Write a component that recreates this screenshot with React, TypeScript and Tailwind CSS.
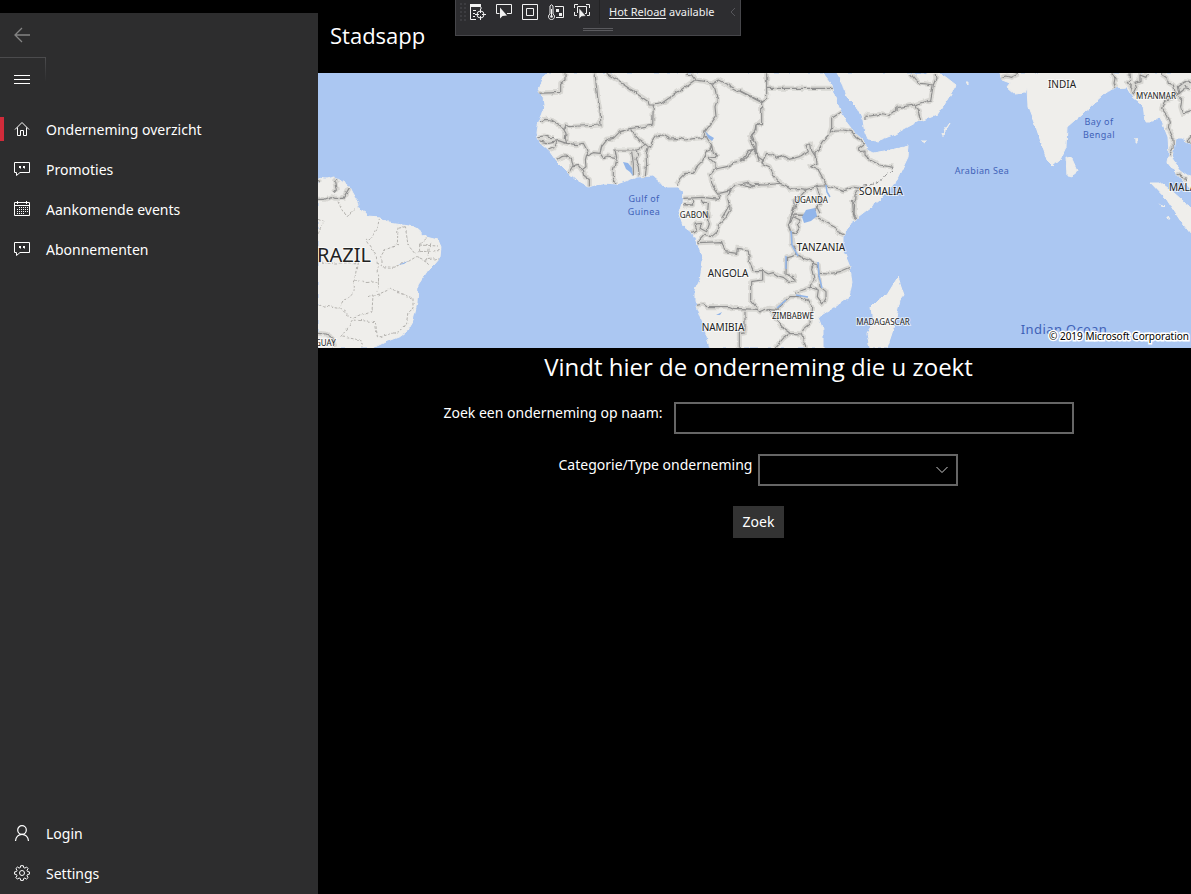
import type { ReactNode } from "react";

type Label = { text: string; x: number; y: number; size: number; start?: boolean };

const COUNTRIES: Label[] = [
  { text: "RAZIL", x: 317, y: 262, size: 20, start: true },
  { text: "GUAY", x: 315, y: 346, size: 8, start: true },
  { text: "GABON", x: 694, y: 218, size: 8 },
  { text: "UGANDA", x: 811, y: 203, size: 8 },
  { text: "SOMALIA", x: 881, y: 195, size: 10 },
  { text: "TANZANIA", x: 821, y: 251, size: 10 },
  { text: "ANGOLA", x: 728, y: 277, size: 10 },
  { text: "NAMIBIA", x: 723, y: 331, size: 10 },
  { text: "ZIMBABWE", x: 793, y: 319, size: 8 },
  { text: "MADAGASCAR", x: 883, y: 325, size: 8 },
  { text: "INDIA", x: 1062, y: 88, size: 10 },
  { text: "MYANMAR", x: 1156, y: 99, size: 8 },
  { text: "MALAYSIA", x: 1169, y: 191, size: 10, start: true },
];

const SEAS: Label[] = [
  { text: "Gulf of", x: 644, y: 202, size: 9 },
  { text: "Guinea", x: 644, y: 215, size: 9 },
  { text: "Bay of", x: 1099, y: 125, size: 9 },
  { text: "Bengal", x: 1099, y: 138, size: 9 },
  { text: "Arabian Sea", x: 982, y: 174, size: 9 },
  { text: "Indian Ocean", x: 1064, y: 334, size: 13 },
];

const LAND = [
  "M318 178L326 179L335 177L341 181L350 187L353 193L359 203L357 208L366 213L367 216L380 217L389 223L403 225L415 227L426 237L438 240L441 247L440 257L434 264L428 270L418 285L417 303L413 320L406 332L401 336L385 342L373 348L318 348Z",
  "M548 73L543 79L538 92L543 97L544 104L543 113L538 125L537 133L540 143L550 152L557 162L567 172L577 181L588 187L602 183L617 184L637 177L653 176L658 180L664 187L677 187L683 192L682 203L679 213L683 225L692 232L697 242L703 260L700 280L695 290L695 300L703 323L710 348L823 348L823 330L818 317L833 308L849 297L852 283L850 267L843 250L843 237L850 223L863 213L880 200L897 180L908 157L909 146L890 150L873 153L867 150L865 142L855 133L847 123L840 110L835 97L832 85L823 73Z",
  "M837 73L843 83L847 97L857 107L863 120L865 133L868 140L877 141L893 135L917 122L937 115L947 100L956 85L947 78L940 73L928 73L925 75L915 75L912 73Z",
  "M1000 73L1002 80L1010 83L1007 87L1015 94L1025 93L1027 88L1028 107L1037 130L1047 160L1053 166L1060 160L1066 147L1067 127L1083 113L1103 95L1113 88L1127 87L1133 97L1143 105L1145 122L1153 122L1160 117L1168 137L1169 153L1167 162L1175 172L1187 185L1200 200L1200 182L1187 175L1180 170L1172 158L1175 138L1182 138L1200 150L1200 73Z",
  "M1066 157L1072 159L1077 170L1073 177L1067 176Z",
  "M1150 182L1160 182L1173 192L1200 216L1200 240L1191 234L1180 220L1167 200Z",
  "M898 277L904 295L900 300L892 333L887 348L870 348L867 333L873 323L871 307L878 300L887 295Z",
  "M1160 203l4 3l-1 1zM1168 216l2 3l-2 0zM1136 138l1 4l-1 0zM922 141l5 0l-2 2zM941 135l9 -12l-7 12zM966 82l2 0l0 3z",
];

const BORDERS = [
  {
    origin: "translate(520 70) scale(0.33333)",
    d: "M135 10L135 30L122 40L122 67L50 70M225 10L234 90L240 120L243 165L180 168L145 170L138 164L132 180L125 170L95 150L75 148L60 158M132 180L138 190L136 205L140 220L170 224L190 220L198 235L205 255L220 248L240 250L250 264L262 258L285 262M55 200L75 198L85 202L105 203M55 212L80 218L115 212L140 220M110 215L105 232L85 240M110 270L125 260L140 258L155 268L160 290L175 286L185 300L198 290L196 270L200 255M160 285L145 310M190 300L195 320L208 325L208 350M285 240L290 262L280 300L280 325L288 340M260 10L320 50L385 95L387 105L400 105L425 100L525 30L515 15L500 12M525 30L555 34L575 42L595 30L720 95M400 105L398 165L360 172L335 175L300 185L280 205L262 208L245 230L240 250M335 178L345 195L360 212L375 222L365 235L350 240L285 240M345 240L355 250L345 268L355 290L358 320M335 245L340 280L340 315M375 222L385 230L378 255L380 280L376 320M378 225L392 232L395 215L405 198L430 195L450 207L480 205L495 210L525 205L550 203L555 185L588 140L585 110L592 90L585 60L575 42M555 195L575 225L570 240L558 245L545 275L530 290L520 310L495 310L480 325L470 345M575 225L580 250L590 258L565 262L585 280L585 298L570 315L575 335L580 350L598 375L595 388L550 382L490 385M585 298L620 290L640 278L670 270L700 240L712 255L718 275M720 160L708 165L705 185L692 200L705 220L705 240M598 370L632 362L645 345L680 338L700 348L720 345M490 403L518 405L518 388M632 362L622 380L628 405L605 445M545 388L550 400L565 400L563 420L568 445",
  },
  {
    origin: "translate(740 70) scale(0.33333)",
    d: "M80 10L80 55L280 55M80 55L80 85L65 95L0 62M65 95L65 160L48 165L48 180L35 195L42 210L30 210L45 240L55 262L68 270L65 280M45 240L25 245L10 265L0 270M65 280L80 250L95 252L110 265L130 258L145 268L160 265L185 258L205 245L198 225L212 222L215 242L230 265M65 280L88 290L100 315L120 340L135 345L155 358L180 355L200 358L240 348L260 348L300 358L310 362L340 352L360 355M0 345L35 352L45 344L75 345L120 340M305 125L275 145L275 170L268 195L250 215L235 240L225 250L228 280L212 290L235 300L245 318L260 348M268 190L285 180L310 180L335 185L350 202L375 220L355 235L357 242L375 240L375 255L390 270L420 285L460 292M355 360L345 375L342 440L352 450M375 150L375 135L390 138L420 133L445 138L475 112L525 105L572 90L580 45L560 42L540 40L525 28L512 12M580 45L588 25L585 12M525 105L535 125L542 150M200 358L180 380L162 390L162 410L152 445M230 352L238 375L245 395L230 410L240 430M160 435L230 435",
  },
  {
    origin: "translate(640 200) scale(0.33333)",
    d: "M268 0L270 30L255 55L235 75L232 95L215 110L195 103L175 125M188 35L205 40L203 60L208 72L200 95L180 85L185 70L165 72L170 88L155 98M130 15L160 15M175 128L245 125L255 155L290 160L292 145L325 150L328 185L340 212L368 212L368 240L332 245L332 300L352 325M368 212L385 222L400 218L415 228L430 232L450 248L462 245L460 230L438 222L440 170L470 162L480 170M165 317L190 312L200 320L270 320L280 325L352 328L360 336L385 325L412 328M475 0L455 45L445 75L455 100L455 130L475 170L505 180L522 190L515 205L522 240L510 262L465 280M455 45L525 48L560 68L590 85L600 102L612 108M545 0L525 30M540 220L565 222L600 215L632 202M522 190L535 195L540 260L558 275L558 295L548 312L532 290L535 270L512 262M412 328L425 312L450 290L480 290L505 302L515 320L510 370L495 382L485 402L450 400L430 385L410 360L400 345L385 325M450 400L430 415L405 443M485 402L490 425L498 443M315 332L315 395L298 398L298 443M638 0L640 40L655 60M445 75L460 50L480 60L472 72L478 85L465 103L452 95",
  },
  {
    origin: "translate(960 70) scale(0.33333)",
    d: "M120 25L140 18L155 22L175 12M455 10L465 25L462 40L470 60M510 10L512 30L502 38L515 52L520 75L530 55L525 40L540 35L540 15L558 22L562 12M605 10L620 20L625 40L640 45L645 65L655 72L635 85L615 90L605 115L620 135L628 160L625 175L638 200L640 230L625 258M655 72L670 60L675 50L693 55M655 80L665 90L662 110L668 130L693 122M693 195L685 210L693 225M660 72L655 50L675 35L693 38M645 318L660 312L665 325L682 328",
  },
  {
    origin: "translate(318 160) scale(0.33333)",
    d: "M0 118L20 118L40 110L50 115L75 115L95 82M58 55L50 62L55 90L48 98M0 60L5 70M0 520L25 522L45 535L50 560",
  },
];

const STATES =
  "M60 125L72 150L88 170L100 155L118 140M0 178L18 185L8 205L0 222M185 172L180 195L160 235L145 238L162 265L175 290L180 320L182 350L180 395M240 200L238 255L200 270L188 290L190 320L225 322L270 305L295 290L320 300L335 318M262 200L270 255L290 280L305 275L305 255L325 235M262 200L240 205M305 255L360 258M305 275L362 272M320 300L362 295M335 250L330 290M0 310L118 308L110 360L140 368L180 365M110 362L108 395L75 425L65 445L0 435M65 445L105 475L162 455L165 405L150 410M165 410L215 388L260 405L285 415L285 445L270 455L265 495L240 515L190 530L178 530L172 485L105 480L85 510L68 530L128 540L135 563";

function Icon({ children, className = "" }: { children: ReactNode; className?: string }) {
  return (
    <svg viewBox="0 0 16 16" className={`size-4 shrink-0 ${className}`} fill="none" stroke="currentColor" aria-hidden="true">
      {children}
    </svg>
  );
}

const BackIcon = () => (
  <Icon className="text-[#848484]">
    <path d="M16 8H1M8 1L1 8l7 7" strokeWidth="1.300" />
  </Icon>
);

const MenuIcon = () => (
  <Icon>
    <path d="M0 3.500h16M0 7.500h16M0 11.500h16" />
  </Icon>
);

const HomeIcon = () => (
  <Icon>
    <path d="M1 8.500L8 1.500l7 7M3.500 6.500v8h3v-5h3v5h3v-8" />
  </Icon>
);

const MessageIcon = () => (
  <Icon>
    <path d="M.5 1.500h15v10H6l-3.500 3v-3h-2z" />
    <path d="M5 5h2v2L6 8V7H5zM9 5h2v2l-1 1V7H9z" fill="currentColor" stroke="none" />
  </Icon>
);

const CalendarIcon = () => (
  <Icon>
    <path d="M.5 1.500h15v13H.5zM.5 4.500h15M3.500 0v3M12.500 0v3" />
    <path d="M5 6.500h9M3 8.500h11M3 10.500h11M3 12.500h8" strokeDasharray="1 1" />
  </Icon>
);

const PersonIcon = () => (
  <Icon>
    <circle cx="8" cy="5" r="4.300" strokeWidth="1.200" />
    <path d="M1.500 16c.2-4 3-6.700 6.500-6.700s6.300 2.700 6.500 6.700" strokeWidth="1.200" />
  </Icon>
);

const GearIcon = () => (
  <Icon>
    <path
      d="M6.700.7h2.600l.4 1.900 1.200.5 1.700-1.100 1.500 1.600-1.100 1.700.5 1.200 1.900.4v2.300l-1.900.4-.5 1.200 1.100 1.700-1.600 1.600-1.600-1.100-1.200.5-.4 1.900H6.700l-.4-1.900-1.200-.5-1.700 1.100-1.500-1.600L3 10.800l-.5-1.200-1.900-.4V6.900l1.900-.4L3 5.300 1.900 3.600 3.500 2l1.600 1.100 1.200-.5z"
    />
    <circle cx="8" cy="8" r="2.500" />
  </Icon>
);

const TreeIcon = () => (
  <Icon>
    <path d="M0 1.500h11" strokeWidth="3" />
    <path d="M.5 3v12.500H6M11 3v2M3 6.500h3M3 9.500h2M3 12.500h2" />
    <circle cx="10.500" cy="10.500" r="3.500" />
    <path d="M10.500 5v4M10.500 12v4M5 10.500h4M12 10.500h4" />
  </Icon>
);

const SelectElementIcon = () => (
  <Icon>
    <path d="M3.500 9.500h-3v-9h15v9H11" />
    <path d="M4 3.500v11l2.500-2.500 4.500-.5z" fill="currentColor" stroke="none" />
  </Icon>
);

const AdornersIcon = () => (
  <Icon>
    <path d="M.5.5h15v15H.5zM4.500 4.500h7v7h-7z" />
  </Icon>
);

const ThermoIcon = () => (
  <Icon>
    <path d="M2 10V2q1.500-2.500 3 0v8a3 3 0 1 1-3 0z" />
    <path d="M3.500 5v8M7 2.500h8.500v11H8" />
    <circle cx="3.500" cy="12.500" r="1.300" fill="currentColor" stroke="none" />
    <path d="M8 5h3v3H8zM11 9h3v3h-3z" fill="currentColor" stroke="none" />
  </Icon>
);

const FocusIcon = () => (
  <Icon>
    <path d="M.5 4V.5H4M12 .5h3.500V4M.5 8v3.500H3M13 11.500h2.500V8M3.500 9V2.500h9v7H11" />
    <path d="M5 4v11l2.500-2.500 4.500-.5z" fill="currentColor" stroke="#2d2d30" strokeWidth=".6" />
  </Icon>
);

function NavItem({ icon, label, active = false }: { icon: ReactNode; label: string; active?: boolean }) {
  return (
    <li>
      <a href="#" className="flex h-10 items-center text-[14px] leading-5" aria-current={active ? "page" : undefined}>
        <span className={active ? "h-6 w-1 bg-[#d02b3a]" : "h-6 w-1"} />
        <span className="ml-[10px] mr-4 flex">{icon}</span>
        <span className="pt-0.5">{label}</span>
      </a>
    </li>
  );
}

function DebugToolbar() {
  const tools = [
    { name: "Live Visual Tree", icon: <TreeIcon /> },
    { name: "Select Element", icon: <SelectElementIcon /> },
    { name: "Display Layout Adorners", icon: <AdornersIcon /> },
    { name: "Track Performance", icon: <ThermoIcon /> },
    { name: "Track Focused Element", icon: <FocusIcon /> },
  ];
  return (
    <div className="absolute left-[455px] top-0 flex h-9 w-[286px] flex-col border border-t-0 border-[#46464a] bg-[#2d2d30] text-[#f1f1f1]">
      <div className="flex h-6 items-center pr-1">
        <span className="mx-[3px] h-5 w-2 bg-[radial-gradient(#3c3c40_1px,transparent_1px)] bg-[length:4px_4px]" />
        <div className="flex gap-[10px]">
          {tools.map((tool) => (
            <button key={tool.name} aria-label={tool.name} className="flex">
              {tool.icon}
            </button>
          ))}
        </div>
        <span className="mx-[9px] h-6 w-px bg-[#222224]" />
        <span className="whitespace-nowrap text-[11px] leading-4">
          <a href="#" className="underline underline-offset-2">Hot Reload</a> available
        </span>
        <button aria-label="Collapse" className="ml-auto flex text-[#55555a]">
          <svg viewBox="0 0 6 10" className="h-[10px] w-[6px]" fill="none" stroke="currentColor" aria-hidden="true">
            <path d="M5 1L1 5l4 4" />
          </svg>
        </button>
      </div>
      <div className="ml-[127px] mt-1 h-[3px] w-[30px] border-y border-[#5a5a5e]" />
    </div>
  );
}

function WorldMap() {
  return (
    <div className="relative h-[275px] overflow-hidden bg-[#abc7f2]">
      <svg viewBox="318 73 873 275" preserveAspectRatio="xMinYMin slice" className="block size-full" role="img" aria-label="Map">
        <defs>
          <clipPath id="land">
            {LAND.map((d) => (
              <path key={d} d={d} />
            ))}
          </clipPath>
          <filter id="coast" filterUnits="userSpaceOnUse" x="308" y="63" width="893" height="295">
            <feTurbulence type="fractalNoise" baseFrequency="0.15" numOctaves="2" seed="4" />
            <feDisplacementMap in="SourceGraphic" scale="4" xChannelSelector="R" yChannelSelector="G" />
          </filter>
        </defs>
        <g filter="url(#coast)">
          <rect x="308" y="63" width="893" height="295" fill="#abc7f2" />
          <g fill="#efeeeb" stroke="#efeeeb" strokeWidth="1">
            {LAND.map((d) => (
              <path key={d} d={d} />
            ))}
          </g>
          <g clipPath="url(#land)" fill="none" strokeLinejoin="round">
            {BORDERS.map((b) => (
              <path key={b.origin} d={b.d} transform={b.origin} stroke="#d8d7d3" strokeWidth="15" />
            ))}
            {BORDERS.map((b) => (
              <path key={b.origin} d={b.d} transform={b.origin} stroke="#8f8f8f" strokeWidth="3.500" />
            ))}
            <path d={STATES} transform="translate(318 160) scale(0.33333)" stroke="#b3b1ad" strokeWidth="3" strokeDasharray="8 5" />
            <path d="M892 170L877 183L857 188" stroke="#8a8a8a" strokeDasharray="4 2" />
          </g>
        </g>
        <g fill="#91b5ea">
          <path d="M806 210l9 -2l2 8l-6 5l-7 2l-2 -6z" />
          <path d="M705 131l4 4l5 3l-2 3l-4 -3z" />
          <path d="M623 162l5 1l4 5l1 8l-3 -4l-4 -3z" />
          <path d="M716 315l6 -3l-2 3zM398 265l10 -4l-4 3z" />
        </g>
        <path d="M791 231l1 14l6 11M786 256l0 13M818 262l1 14l3 12M826 185l1 7l3 5M777 308l9 -8M796 295l12 2" fill="none" stroke="#91b5ea" strokeWidth="1.500" />
        <g fill="#3f62b8" fontFamily="Noto Sans, sans-serif" textAnchor="middle" className="tracking-wide">
          {SEAS.map((l) => (
            <text key={l.text} x={l.x} y={l.y} fontSize={l.size}>
              {l.text}
            </text>
          ))}
        </g>
        <g fill="#222" stroke="#fff" strokeOpacity="0.6" strokeWidth="2" paintOrder="stroke" fontFamily="Noto Sans, sans-serif">
          {COUNTRIES.map((l) => (
            <text key={l.text} x={l.x} y={l.y} fontSize={l.size} textAnchor={l.start ? "start" : "middle"}>
              {l.text}
            </text>
          ))}
        </g>
        <text x="1049" y="340" fontSize="10" fill="#000" stroke="#fff" strokeWidth="3" paintOrder="stroke" fontFamily="Noto Sans, sans-serif">
          © 2019 Microsoft Corporation
        </text>
      </svg>
    </div>
  );
}

function SearchForm() {
  return (
    <form className="flex flex-col items-center pl-2 text-[14px] leading-[22px]" onSubmit={(e) => e.preventDefault()}>
      <h2 className="mt-[3px] font-['Open_Sans',sans-serif] text-[24px] leading-8">Vindt hier de onderneming die u zoekt</h2>
      <div className="mt-[19px] flex items-start gap-[11px]">
        <label htmlFor="name">Zoek een onderneming op naam:</label>
        <input id="name" type="text" className="h-8 w-[400px] border-2 border-[#666] bg-black px-2 outline-none" />
      </div>
      <div className="mt-5 flex items-start gap-[6px]">
        <label htmlFor="category">Categorie/Type onderneming</label>
        <div className="relative flex">
          <select id="category" className="h-8 w-[200px] appearance-none border-2 border-[#666] bg-black px-2 outline-none">
            <option></option>
          </select>
          <svg viewBox="0 0 12 8" className="pointer-events-none absolute right-[10px] top-3 h-2 w-3" fill="none" stroke="#ccc" aria-hidden="true">
            <path d="M.5 1L6 6.500 11.500 1" />
          </svg>
        </div>
      </div>
      <button type="submit" className="mt-5 h-8 bg-[#333] px-[10px]">
        Zoek
      </button>
    </form>
  );
}

export default function App() {
  return (
    <div className="relative flex min-h-screen bg-black font-['Noto_Sans',sans-serif] text-white">
      <aside className="mt-[13px] flex w-[318px] shrink-0 flex-col bg-[#2d2d2e]">
        <button aria-label="Back" className="flex h-11 w-[46px] items-center pl-[14px]">
          <BackIcon />
        </button>
        <button aria-label="Menu" className="flex h-11 w-[46px] items-center border-t border-[#4b4b4d] bg-[linear-gradient(#4b4b4d,#2d2d2e)] bg-[length:1px_24px] bg-right-top bg-no-repeat pl-[14px]">
          <MenuIcon />
        </button>
        <nav className="mt-2 flex grow flex-col justify-between pb-px">
          <ul>
            <NavItem icon={<HomeIcon />} label="Onderneming overzicht" active />
            <NavItem icon={<MessageIcon />} label="Promoties" />
            <NavItem icon={<CalendarIcon />} label="Aankomende events" />
            <NavItem icon={<MessageIcon />} label="Abonnementen" />
          </ul>
          <ul>
            <NavItem icon={<PersonIcon />} label="Login" />
            <NavItem icon={<GearIcon />} label="Settings" />
          </ul>
        </nav>
      </aside>
      <main className="min-w-0 grow">
        <header className="flex h-[73px] items-center px-3 pb-1">
          <h1 className="font-['Open_Sans',sans-serif] text-[22px] leading-8">Stadsapp</h1>
        </header>
        <WorldMap />
        <SearchForm />
      </main>
      <DebugToolbar />
    </div>
  );
}
